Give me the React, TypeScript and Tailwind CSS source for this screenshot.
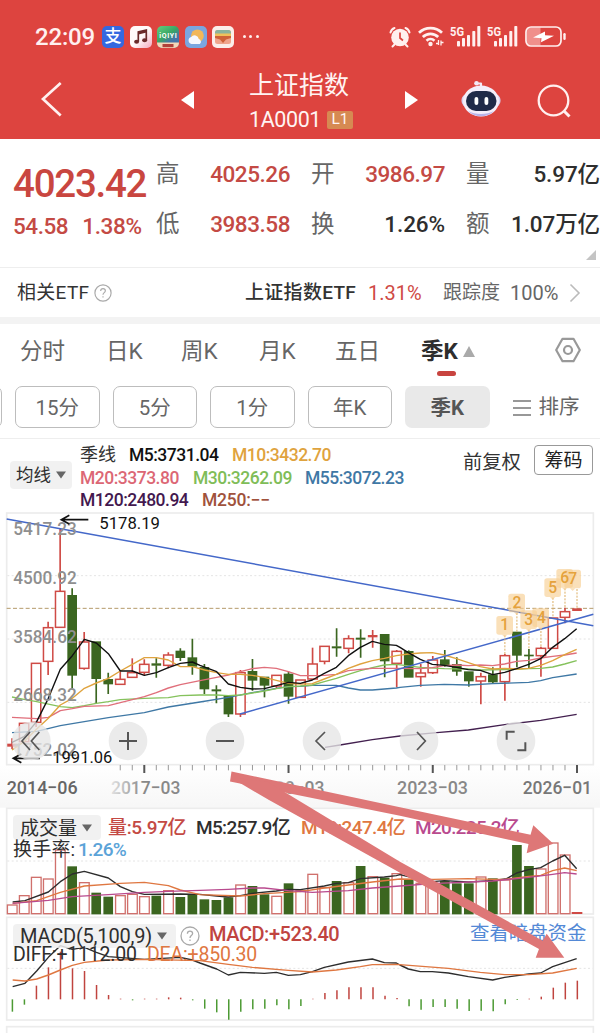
import type { ReactNode } from 'react';
import clsx from 'clsx';

type Dir = 'r' | 'g';
type Candle = [Dir, number, number, number, number]; // dir, bodyTop, bodyBottom, high, low

const STEP = 36.06;
const X0 = 36.2;
const cx = (i: number) => X0 + i * STEP;

const candles: Candle[] = [
  ['r', 717, 724, 700, 732], ['r', 655, 710, 655, 710], ['r', 475, 652, 475, 666], ['r', 368, 469, 350, 510],
  ['r', 259, 367, 72, 367], ['g', 272, 510, 250, 550], ['r', 411, 490, 381, 494], ['g', 411, 520, 411, 596],
  ['g', 524, 536, 503, 567], ['r', 523, 538, 500, 538], ['r', 503, 517, 460, 517], ['r', 478, 502, 463, 511],
  ['g', 476, 481, 460, 518], ['r', 450, 481, 442, 490], ['g', 439, 457, 430, 468], ['g', 459, 483, 401, 509],
  ['g', 488, 551, 477, 567], ['g', 554, 558, 541, 595], ['g', 575, 626, 575, 636], ['r', 503, 627, 495, 636],
  ['g', 500, 525, 462, 557], ['g', 517, 540, 517, 577], ['r', 511, 543, 511, 550], ['g', 508, 573, 500, 596],
  ['r', 525, 577, 525, 577], ['r', 477, 522, 428, 522], ['r', 424, 469, 424, 478], ['g', 425, 429, 370, 455],
  ['r', 401, 430, 391, 445], ['g', 399, 403, 373, 458], ['r', 391, 396, 375, 428], ['g', 389, 467, 387, 517],
  ['r', 439, 475, 435, 547], ['g', 440, 516, 436, 516], ['r', 504, 515, 477, 545], ['r', 465, 503, 453, 507],
  ['g', 465, 478, 435, 485], ['g', 479, 498, 457, 512], ['g', 501, 527, 501, 545], ['r', 515, 528, 503, 598],
  ['g', 510, 530, 487, 537], ['r', 452, 530, 447, 587], ['g', 382, 450, 382, 487], ['g', 450, 453, 432, 492],
  ['r', 430, 452, 425, 515], ['r', 339, 430, 339, 430], ['r', 320, 337, 308, 355], ['r', 311, 317, 311, 317],
];

const volumeTops = [
  315, 287, 232, 237, 150, 199, 248, 278, 290, 287, 283, 290, 287, 272, 291, 283, 298, 300, 292, 255, 258, 283, 289, 250,
  272, 223, 263, 243, 248, 198, 230, 233, 221, 240, 250, 250, 243, 250, 250, 231, 235, 240, 135, 198, 207, 129, 165, 338,
];

const macdEnds = [
  635, 614, 557, 502, 455, 505, 513, 555, 585, 596, 601, 596, 596, 592, 593, 601, 626, 637, 659, 635, 628, 626, 616, 628,
  618, 596, 579, 571, 562, 562, 562, 587, 594, 619, 629, 621, 621, 626, 633, 632, 634, 613, 600, 596, 590, 563, 548, 542,
];

const maLines = [
  { color: '#3f78a5', points: '36,683 110,679 181,662 253,650 325,638 433,623 505,606 600,591 685,577 757,563 829,550 865,545 901,544 937,541 1009,541 1045,549 1081,555 1117,555 1189,549 1200,547 1261,541 1333,538 1405,540 1478,536 1586,532 1622,527 1658,518 1730,507' },
  { color: '#85c25c', points: '36,576 72,583 110,590 181,605 217,608 253,602 289,595 325,590 361,584 433,580 505,578 541,572 600,570 650,570 685,572 721,570 757,564 793,558 829,551 865,545 901,543 937,540 973,530 1009,520 1045,508 1081,497 1117,488 1153,480 1189,478 1261,487 1333,491 1405,492 1441,495 1514,494 1550,493 1586,491 1622,490 1658,486 1694,477 1730,467' },
  { color: '#e06f7b', points: '36,637 110,641 145,637 181,617 217,611 253,604 325,602 361,593 397,584 433,575 469,563 505,549 541,539 600,527 650,517 685,510 721,500 757,491 793,487 829,490 865,500 901,512 937,512 973,511 1009,508 1045,497 1081,493 1117,490 1189,490 1261,491 1297,488 1333,482 1369,480 1405,482 1441,480 1478,482 1514,477 1550,469 1586,466 1622,459 1658,454 1694,450 1730,444' },
  { color: '#dfa33e', points: '36,735 72,710 110,672 145,640 181,600 217,580 253,550 289,534 325,520 361,498 397,478 433,458 469,458 505,465 541,485 577,485 614,495 650,503 685,508 721,508 757,511 793,517 829,526 865,535 901,537 937,536 973,522 1009,508 1045,490 1081,477 1117,467 1153,460 1189,452 1225,447 1261,444 1297,443 1333,450 1369,461 1405,473 1441,485 1478,492 1514,490 1550,492 1586,490 1622,481 1658,467 1694,449 1730,433' },
  { color: '#111111', points: '36,712 72,695 110,650 145,580 181,493 217,452 253,403 289,414 325,446 361,498 397,498 433,511 469,503 505,488 541,475 577,471 600,481 650,500 685,537 721,547 757,552 793,551 829,542 865,532 901,535 937,525 973,505 1009,487 1045,452 1081,427 1117,409 1153,418 1189,421 1200,427 1225,443 1261,463 1297,478 1333,481 1369,487 1405,494 1441,496 1478,509 1514,502 1550,491 1586,478 1622,461 1658,427 1694,401 1730,371' },
  { color: '#43204f', points: '975,727 1020,720 1117,704 1200,693 1310,683 1405,675 1514,659 1622,646 1730,628' },
];

const volLines = [
  { color: '#2d2d2d', points: '38,306 75,302 145,276 181,245 217,222 253,214 325,234 361,260 397,275 433,283 541,282 600,283 650,288 685,291 721,287 757,280 829,273 865,268 901,269 973,258 1009,250 1045,248 1081,236 1153,231 1189,227 1200,224 1261,239 1297,245 1333,242 1405,246 1478,242 1520,236 1550,219 1586,209 1622,203 1658,183 1694,166 1730,206' },
  { color: '#df7741', points: '38,310 110,302 181,277 253,258 361,250 433,247 505,257 541,270 600,284 721,288 793,281 901,275 973,264 1045,255 1117,246 1200,237 1300,238 1405,236 1478,238 1514,238 1586,229 1622,226 1658,212 1694,204 1730,212' },
  { color: '#b94a8e', points: '38,310 145,301 217,290 325,284 433,277 505,274 600,271 685,268 757,264 793,264 865,272 937,277 1045,272 1117,264 1200,258 1297,251 1405,246 1478,243 1586,232 1658,223 1694,218 1730,222' },
];

const macdLines = [
  { color: '#2d2d2d', points: '38,560 75,550 110,513 145,472 181,437 217,448 253,442 289,457 325,470 433,478 541,472 577,480 600,489 650,507 685,525 721,517 793,520 829,517 865,526 901,524 937,515 973,502 1045,486 1117,477 1153,488 1189,489 1200,495 1225,507 1261,515 1297,515 1345,519 1405,530 1478,540 1514,532 1586,522 1622,519 1658,500 1694,488 1730,476' },
  { color: '#df7741', points: '38,540 75,543 110,537 145,525 181,510 217,496 253,487 325,480 433,478 600,482 685,493 757,502 865,511 937,516 1009,510 1081,500 1117,494 1189,493 1345,505 1441,517 1514,524 1586,524 1658,519 1730,505' },
];

const flags = [
  { n: '1', x: 1514, y: 333, to: 450, tx: 1514 },
  { n: '2', x: 1550, y: 266, to: 382, tx: 1551 },
  { n: '3', x: 1586, y: 316, to: 432, tx: 1586 },
  { n: '4', x: 1622, y: 310, to: 425, tx: 1624 },
  { n: '5', x: 1658, y: 220, to: 339, tx: 1658 },
  { n: '6', x: 1694, y: 192, to: 308, tx: 1694 },
  { n: '7', x: 1718, y: 194, to: 311, tx: 1718 },
];

const priceLabels = [
  { v: '5417.23', y: 89 },
  { v: '4500.92', y: 238 },
  { v: '3584.62', y: 413 },
  { v: '2668.32', y: 589 },
  { v: '1752.02', y: 753 },
];

function Lines({ lines }: { lines: { color: string; points: string }[] }) {
  return (
    <>
      {lines.map((l) => (
        <polyline key={l.color} points={l.points} fill="none" stroke={l.color} strokeWidth="4.2" strokeLinejoin="round" />
      ))}
    </>
  );
}

function Help({ className }: { className?: string }) {
  return (
    <svg viewBox="0 0 20 20" className={className} fill="none" stroke="#aaa" strokeWidth="1.3">
      <circle cx="10" cy="10" r="9" />
      <path d="M7.4 7.8c0-3.6 5.2-3.4 5.2-.2 0 2-2.6 2-2.6 4.3M10 13.6v1.5" />
    </svg>
  );
}

function Caret() {
  return (
    <svg viewBox="0 0 10 8" className="h-2 w-2.5 shrink-0">
      <path d="M0 .5h10L5 7.5z" fill="#666" />
    </svg>
  );
}

function Signal() {
  return (
    <svg viewBox="0 0 31 21" className="h-[21px] w-[31px] overflow-visible" fill="#fff0ef">
      <text x="0" y="10" fontSize="12.5" fontWeight="700" textLength="14" lengthAdjust="spacingAndGlyphs">5G</text>
      <rect x="7" y="15" width="3" height="5.5" rx=".8" />
      <rect x="12" y="12" width="3" height="8.5" rx=".8" />
      <rect x="17" y="9" width="3" height="11.5" rx=".8" />
      <rect x="22.3" y="5" width="3" height="15.5" rx=".8" />
      <rect x="27.3" y="0" width="3" height="20.5" rx=".8" />
    </svg>
  );
}

function StatusBar() {
  return (
    <div className="flex h-[50px] items-end pr-[33px] pl-[35px] text-[#fff0ef]">
      <div className="flex h-[27px] w-[67px] items-center text-[24px] font-medium tracking-[-0.2px]">22:09</div>
      <div className="flex h-[27px] items-center gap-[5.5px]">
        <div className="flex size-[22px] items-center justify-center rounded-[5px] bg-[#3468df] text-[17px] leading-none font-medium text-white">支</div>
        <svg viewBox="0 0 22 22" className="size-[22px]">
          <defs>
            <linearGradient id="music" x1="0" y1="0" x2="1" y2="1">
              <stop offset="0.5" stopColor="#fffafa" />
              <stop offset="1" stopColor="#f3a8bd" />
            </linearGradient>
          </defs>
          <rect width="22" height="22" rx="5" fill="url(#music)" />
          <path d="M8.3 15.5V6l8-1.9v9.8" fill="none" stroke="#6b2a2a" strokeWidth="1.7" />
          <path d="M8.3 7.2l8-1.9" stroke="#6b2a2a" strokeWidth="2.5" />
          <ellipse cx="6.6" cy="15.8" rx="2.5" ry="2" fill="#6b2a2a" />
          <ellipse cx="14.6" cy="14.2" rx="2.5" ry="2" fill="#6b2a2a" />
        </svg>
        <svg viewBox="0 0 22 22" className="size-[22px]">
          <defs>
            <linearGradient id="iq" x1="0" y1="0" x2="0.7" y2="1">
              <stop offset="0" stopColor="#62cf7c" />
              <stop offset="0.5" stopColor="#38a565" />
              <stop offset="0.75" stopColor="#4575a8" />
            </linearGradient>
          </defs>
          <rect width="22" height="22" rx="5" fill="url(#iq)" />
          <path d="M0 16.5h22v.5a5 5 0 0 1-5 5H5a5 5 0 0 1-5-5z" fill="#f4d6b8" />
          <path d="M5.5 18h11v3.2h-11z" fill="#b0413a" />
          <text x="2.3" y="12" fontSize="7" fontWeight="700" fill="#fff" textLength="17.5">iQIYI</text>
        </svg>
        <svg viewBox="0 0 22 22" className="size-[22px]">
          <rect width="22" height="22" rx="5" fill="#7ba6df" />
          <circle cx="12.4" cy="9.8" r="6.4" fill="#f2b758" />
          <path d="M6.5 18a3.6 3.6 0 0 1-.3-7 4.3 4.3 0 0 1 7.6 2 2.8 2.8 0 0 1 1 5z" fill="#f6f8fd" />
        </svg>
        <svg viewBox="0 0 22 22" className="size-[22px]">
          <rect width="22" height="22" rx="5" fill="#fbeeea" />
          <rect x="3" y="4" width="16" height="14" rx="2.5" fill="#f0a58c" />
          <path d="M3 8.5V6.3A2.5 2.5 0 0 1 5.5 4h11A2.5 2.5 0 0 1 19 6.5v2z" fill="#8ab39c" />
          <path d="M3 7.5h16V10H3z" fill="#f0c05a" />
          <path d="M3 10h16v2l-5 1.5-3 3.5-3-3.5L3 12z" fill="#cf6238" />
        </svg>
        <div className="ml-[3px] flex gap-[3.5px]">
          <i className="size-[3px] rounded-full bg-[#fff0ef]" />
          <i className="size-[3px] rounded-full bg-[#fff0ef]" />
          <i className="size-[3px] rounded-full bg-[#fff0ef]" />
        </div>
      </div>
      <div className="ml-auto flex h-[27px] items-center">
        <svg viewBox="0 0 22 22" className="mr-[7px] size-[22px]">
          <path d="M5.5 18.5l-2 2M16.5 18.5l2 2M1.500 6.500c.5-2.200 2-3.800 4-4.500M20.500 6.500c-.5-2.200-2-3.800-4-4.500" stroke="#fff0ef" strokeWidth="2" strokeLinecap="round" fill="none" />
          <circle cx="11" cy="11.5" r="8.8" fill="#fff0ef" />
          <path d="M11 6.5V12l3 2.5" fill="none" stroke="#dd443f" strokeWidth="1.7" />
        </svg>
        <svg viewBox="0 0 26 21" className="mr-[6px] h-[21px] w-[26px]" fill="none" stroke="#fff0ef" strokeWidth="2.7">
          <path d="M1 6.800a16.500 16.500 0 0 1 23 0M4.800 11a11 11 0 0 1 15.400 0M8.500 14.700a6 6 0 0 1 8 0" />
          <circle cx="12.5" cy="18" r="2.2" fill="#fff0ef" stroke="none" />
          <path d="M20.5 14v5M23 14.5v5M18 17.5h3M22.500 16.500h3" strokeWidth="1.3" />
        </svg>
        <Signal />
        <div className="w-[6px]" />
        <Signal />
        <svg viewBox="0 0 42 21" className="ml-[7px] h-[21px] w-[42px]">
          <path d="M2 5.500a4 4 0 0 1 4-4h9.500v18H6a4 4 0 0 1-4-4z" fill="#f08f8b" />
          <rect x="1" y="1" width="35" height="19" rx="5" fill="none" stroke="#fff0ef" strokeWidth="1.7" />
          <rect x="38.3" y="7" width="2.4" height="7" rx="1.2" fill="#fff0ef" />
          <path d="M20 5.5L8 11.5l8.500.8-.5 4L29 9.800l-9-.6z" fill="#fff" />
        </svg>
      </div>
    </div>
  );
}

function TitleBar() {
  return (
    <div className="flex h-[89px] items-start pt-[17px]">
      <svg viewBox="0 0 24 36" className="mt-[14px] ml-[40px] h-9 w-6" fill="none" stroke="#fff0ef" strokeWidth="2.7">
        <path d="M20.700 2L3 18l17.700 16.500" />
      </svg>
      <svg viewBox="0 0 14 18" className="mt-[24px] ml-[117px] h-[18px] w-[14px]"><path d="M13 0v18L0 9z" fill="#fff" /></svg>
      <div className="ml-[54px] w-[106px] text-[#fff4f3]">
        <div className="h-[37px] text-[25px] leading-[37px]">上证指数</div>
        <div className="flex h-[32px] items-center gap-[6px] leading-none">
          <span className="text-[21.5px] tracking-[-0.4px]">1A0001</span>
          <span className="flex h-[18px] w-[26px] items-center justify-center rounded-[2px] bg-[#d68a52] text-[15.5px]">L1</span>
        </div>
      </div>
      <svg viewBox="0 0 14 18" className="mt-[24px] ml-[50px] h-[18px] w-[14px]"><path d="M0 0v18l13-9z" fill="#fff" /></svg>
      <svg viewBox="0 0 40 38" className="mt-[13px] ml-[42px] h-[38px] w-[40px]">
        <path d="M20 7V3.500M20 3.500h-4.500" stroke="#f3e9f6" strokeWidth="2.2" strokeLinecap="round" />
        <circle cx="15.5" cy="3.3" r="2.3" fill="#f3e9f6" />
        <rect x=".5" y="14" width="39" height="13" rx="6" fill="#d9d2f2" />
        <ellipse cx="20" cy="21" rx="18" ry="15.5" fill="#f4eefa" />
        <path d="M7 31c7 7 19 7 26 0-7 4-19 4-26 0z" fill="#b9b3ea" />
        <rect x="5" y="11" width="30.5" height="20" rx="10" fill="#202a48" />
        <rect x="13.5" y="17" width="3.8" height="8" rx="1.9" fill="#fff" />
        <rect x="23.5" y="17" width="3.8" height="8" rx="1.9" fill="#fff" />
      </svg>
      <svg viewBox="0 0 36 36" className="mt-[17px] ml-[36px] size-9" fill="none" stroke="#fff0ef" strokeWidth="2.3">
        <circle cx="16.5" cy="16.5" r="14.8" />
        <path d="M27 27l5.500 5.500" strokeWidth="3" />
      </svg>
    </div>
  );
}

function Stat({ label, value, red }: { label: string; value: string; red?: boolean }) {
  return (
    <div className="flex h-[50px] items-center justify-between whitespace-nowrap">
      <span className="text-[23.5px] text-[#666]">{label}</span>
      <span className={clsx('text-[22.5px] font-medium', red ? 'tracking-[-0.45px] text-[#c44a44]' : 'tracking-[-0.1px] text-[#2e2e2e]')}>{value}</span>
    </div>
  );
}

function Quote() {
  return (
    <div className="relative flex h-[129px] border-b border-[#eeeeee] pt-[11px]">
      <div className="w-[156px] pl-[13px] text-[#c94640]">
        <div className="mt-[10px] h-[48px] text-[38.5px] leading-[48px] font-medium tracking-[-1.25px]">4023.42</div>
        <div className="flex h-[38px] items-center gap-[14px] text-[22.5px] font-medium text-[#c44a44]">
          <span className="tracking-[-0.45px]">54.58</span>
          <span className="tracking-[-0.3px]">1.38%</span>
        </div>
      </div>
      <div className="grid h-[100px] grid-cols-[134px_134px_134px] gap-x-[21px]">
        <Stat label="高" value="4025.26" red />
        <Stat label="开" value="3986.97" red />
        <Stat label="量" value="5.97亿" />
        <Stat label="低" value="3983.58" red />
        <Stat label="换" value="1.26%" />
        <Stat label="额" value="1.07万亿" />
      </div>
      <svg viewBox="0 0 10 10" className="absolute right-[4px] bottom-[7px] size-[10px]"><path d="M10 0v10H0z" fill="#c4c4c4" /></svg>
    </div>
  );
}

function EtfRow() {
  return (
    <div className="flex h-[49px] items-center pt-[1px] pl-[17px] text-[19px] whitespace-nowrap text-[#333]">
      <span className="w-[77px] tracking-[0.3px]">相关ETF</span>
      <Help className="size-[18px]" />
      <span className="ml-[133px] w-[123px] font-medium tracking-[0.3px]">上证指数ETF</span>
      <span className="w-[75px] text-[20px] text-[#cf4a45]">1.31%</span>
      <span className="w-[67px] text-[#666]">跟踪度</span>
      <span className="w-[59px] text-[20px] text-[#666]">100%</span>
      <svg viewBox="0 0 12 20" className="h-5 w-3" fill="none" stroke="#bbb" strokeWidth="1.6"><path d="M1.500 1.500L10 10l-8.500 8.500" /></svg>
    </div>
  );
}

function Tabs() {
  return (
    <div className="grid h-[62px] grid-cols-[86px_75px_78px_76px_86px_134px_1fr] pt-[9px] pl-[20px] text-[22.5px] leading-[36px] text-[#666]">
      <span>分时</span>
      <span>日K</span>
      <span>周K</span>
      <span>月K</span>
      <span>五日</span>
      <div>
        <div className="flex items-center gap-[5px] font-bold text-[#2e2e2e]">
          季K
          <svg viewBox="0 0 12 11" className="h-[11px] w-[12px]"><path d="M6 0l6 11H0z" fill="#aaa" /></svg>
        </div>
        <div className="mt-[2px] ml-[16px] h-[5px] w-[19px] rounded-full bg-[#c8443f]" />
      </div>
      <svg viewBox="0 0 26 26" className="mt-[4px] size-[26px]" fill="none" stroke="#999" strokeWidth="2.2">
        <path d="M7.500 1.800h11L24.800 13l-6.300 11.200h-11L1.200 13z" strokeLinejoin="round" />
        <circle cx="13" cy="13" r="4" />
      </svg>
    </div>
  );
}

function Chips() {
  return (
    <div className="flex h-[53px] items-start gap-[13px] overflow-hidden border-b border-[#eeeeee] text-[20.5px] text-[#666]">
      <div className="-ml-[82.5px] h-[42px] w-[84.5px] shrink-0 rounded-[7px] border border-[#bdbdbd]" />
      {['15分', '5分', '1分', '年K'].map((t) => (
        <div key={t} className="flex h-[42px] w-[84.5px] shrink-0 items-center justify-center rounded-[7px] border border-[#bdbdbd] pt-[2px]">{t}</div>
      ))}
      <div className="flex h-[42px] w-[84.5px] shrink-0 items-center justify-center rounded-[7px] bg-[#e9e9e9] pt-[2px] font-bold text-[#555]">季K</div>
      <div className="ml-[10px] flex h-[42px] items-center gap-[8px] pt-[1px]">
        <svg viewBox="0 0 18 16" className="h-4 w-[18px]" stroke="#777" strokeWidth="1.5"><path d="M0 1h18M0 8h18M0 15h18" /></svg>
        排序
      </div>
    </div>
  );
}

function Drop({ children, className }: { children: ReactNode; className?: string }) {
  return <div className={clsx('flex shrink-0 items-center rounded-[4px] bg-[#efefef]/85 text-[#2e2e2e]', className)}>{children}<Caret /></div>;
}

function MaLegend() {
  return (
    <div className="flex h-[66px] text-[17.5px] font-medium whitespace-nowrap">
      <Drop className="mt-[22px] ml-[10px] h-[28px] w-[62px] gap-[5px] pl-[6px] font-normal">均线</Drop>
      <div className="ml-[8px] w-[383px] pt-[5px] leading-[22.7px] tracking-[-0.5px]">
        <div className="flex">
          <span className="w-[49px] text-[18px] font-normal tracking-normal text-[#333]">季线</span>
          <span className="w-[103px] text-[#111]">M5:3731.04</span>
          <span className="text-[#dfa33e]">M10:3432.70</span>
        </div>
        <div className="flex">
          <span className="w-[113px] text-[#dc6775]">M20:3373.80</span>
          <span className="w-[112px] text-[#7fbd58]">M30:3262.09</span>
          <span className="text-[#3f78a5]">M55:3072.23</span>
        </div>
        <div className="flex">
          <span className="w-[122px] text-[#43184f]">M120:2480.94</span>
          <span className="tracking-[-0.2px] text-[#a0523c]">M250:−−</span>
        </div>
      </div>
      <span className="mt-[10px] w-[71px] text-[19.3px] leading-[28px] font-normal text-[#333]">前复权</span>
      <div className="mt-[6px] flex h-[30px] w-[59px] items-center justify-center rounded-[4px] border border-[#999] pt-[2px] text-[19px] font-normal text-[#222]">筹码</div>
    </div>
  );
}

function RoundButton({ x, d, w = 5 }: { x: number; d: string; w?: number }) {
  return (
    <g transform={`translate(${x} 708)`}>
      <circle r="58" fill="#e6e6e6" fillOpacity="0.78" />
      <path d={d} fill="none" stroke="#555" strokeWidth={w} />
    </g>
  );
}

function KChart() {
  return (
    <svg viewBox="0 0 1800 900" className="block h-[300px] w-[600px]">
      <defs>
        <linearGradient id="axis" x1="0" y1="0" x2="0" y2="1">
          <stop offset="0" stopColor="#fff" />
          <stop offset="1" stopColor="#f7f7f7" />
        </linearGradient>
        <linearGradient id="fadeA" gradientUnits="userSpaceOnUse" x1="320" y1="0" x2="430" y2="0">
          <stop offset="0" stopColor="#888" stopOpacity="0.1" />
          <stop offset="1" stopColor="#888" />
        </linearGradient>
        <linearGradient id="fadeB" gradientUnits="userSpaceOnUse" x1="810" y1="0" x2="880" y2="0">
          <stop offset="0" stopColor="#888" stopOpacity="0" />
          <stop offset="1" stopColor="#888" />
        </linearGradient>
      </defs>
      <rect x="0" y="780" width="1800" height="120" fill="url(#axis)" />
      <rect x="20" y="24" width="1760" height="755" fill="#fff" stroke="#ececec" strokeWidth="5" />
      {[212, 402, 592].map((y) => (
        <path key={y} d={`M22 ${y}H1778`} stroke="#e4e4e4" strokeWidth="3" strokeDasharray="6 7" />
      ))}
      <path d="M20 310H1780" stroke="#b59a6a" strokeWidth="3" strokeDasharray="12 7" />

      {candles.map(([dir, top, bottom, high, low], i) => {
        const x = cx(i);
        const thin = bottom - top < 8;
        const color = dir === 'r' ? '#cf4a45' : '#3b6620';
        return (
          <g key={i}>
            <path d={`M${x} ${high}V${top}M${x} ${bottom}V${low}`} stroke={color} strokeWidth="5" />
            {dir === 'r' && !thin ? (
              <rect x={x - 14} y={top} width="28" height={bottom - top} fill="#fff" stroke={color} strokeWidth="4.5" />
            ) : (
              <rect x={x - 14.5} y={top - (thin ? 1 : 2)} width="29" height={bottom - top + (thin ? 2 : 4)} fill={color} />
            )}
          </g>
        );
      })}
      <Lines lines={maLines} />
      <path d="M20 42L1780 362M720 627L1780 328" stroke="#4468c9" strokeWidth="4.5" />

      {priceLabels.map((p) => (
        <text key={p.v} x="40" y={p.y} fontSize="56" fontWeight="500" fill="#8f8f8f" textLength="190" lengthAdjust="spacingAndGlyphs">{p.v}</text>
      ))}

      {flags.map((f) => (
        <g key={f.n}>
          <path d={`M${cx(40 + Number(f.n))} ${f.y + 58}V${f.to}`} stroke="#dcae63" strokeWidth="3" strokeDasharray="6 4" />
          <rect x={f.x - 25} y={f.y} width="50" height="56" rx="8" fill="#f7cf94" fillOpacity="0.65" />
          <path d={`M${f.x - 8} ${f.y + 56}h16l-8 8z`} fill="#f7cf94" fillOpacity="0.65" />
        </g>
      ))}
      {flags.map((f) => (
        <text key={f.n} x={f.tx} y={f.y + 43} fontSize="47" fontWeight="500" fill="#e5a23c" textAnchor="middle">{f.n}</text>
      ))}

      <g fill="none" stroke="#111" strokeWidth="5">
        <path d="M265 44H186M208 31L184 44l24 13" />
        <path d="M120 760H42M64 747L40 760l24 13" />
      </g>
      <text x="298" y="73" fontSize="52" fill="#111" textLength="182" lengthAdjust="spacingAndGlyphs">5178.19</text>
      <text x="157" y="773" fontSize="52" fill="#111" textLength="180" lengthAdjust="spacingAndGlyphs">1991.06</text>

      <RoundButton x={94} d="M-4 -27L-28 0L-4 27M24 -27L0 0L24 27" />
      <RoundButton x={384} d="M-27 0H27M0 -27V27" w={6} />
      <RoundButton x={675} d="M-27 0H27" w={6} />
      <RoundButton x={966} d="M9 -27L-18 0L9 27" />
      <RoundButton x={1257} d="M-6 -27L19 0L-6 27" />
      <RoundButton x={1548} d="M-28 -4V-28H-4M28 4V28H4" w={6} />

      {Array.from({ length: 39 }, (_, k) => k + 9).map((i) => {
        const major = [11, 23, 35, 47].includes(i);
        return <path key={i} d={`M${cx(i)} 780V${major ? 804 : 796}`} stroke={major ? '#555' : '#999'} strokeWidth={major ? 6 : 3} />;
      })}
      <g fontSize="56" fontWeight="500" fill="#888">
        <text x="20" y="866" fill="#666" textLength="213" lengthAdjust="spacingAndGlyphs">2014−06</text>
        <text x="333" y="866" fill="url(#fadeA)" textLength="208" lengthAdjust="spacingAndGlyphs">2017−03</text>
        <text x="765" y="866" fill="url(#fadeB)" textLength="208" lengthAdjust="spacingAndGlyphs">2020−03</text>
        <text x="1191" y="866" textLength="213" lengthAdjust="spacingAndGlyphs">2023−03</text>
        <text x="1568" y="866" fill="#777" textLength="208" lengthAdjust="spacingAndGlyphs">2026−01</text>
      </g>
    </svg>
  );
}

function VolumePanel() {
  return (
    <div className="relative h-[111px] whitespace-nowrap">
      <svg viewBox="0 15 1800 333" className="absolute inset-0 h-[111px] w-[600px]">
        <rect x="0" y="15" width="1800" height="8" fill="#f7f7f7" />
        <rect x="20" y="25" width="1760" height="317" fill="none" stroke="#ececec" strokeWidth="5" />
        <path d="M22 183H1778" stroke="#e4e4e4" strokeWidth="3" strokeDasharray="6 7" />
        {volumeTops.map((top, i) => {
          if (i === 47) return <rect key={i} x={cx(i) - 16} y="336" width="32" height="6" fill="#cf4a45" />;
          return candles[i][0] === 'r' ? (
            <rect key={i} x={cx(i) - 14} y={top} width="29" height={341 - top} fill="#fff" stroke="#d0706c" strokeWidth="4" />
          ) : (
            <rect key={i} x={cx(i) - 14.5} y={top} width="29" height={343 - top} fill="#3b6620" />
          );
        })}
        <Lines lines={volLines} />
      </svg>
      <div className="relative flex items-center pt-[10px] pl-[13px] text-[19px] leading-[25px] font-medium tracking-[-0.65px]">
        <Drop className="h-[25px] w-[88px] gap-[5px] pt-px pl-[7px] font-normal tracking-normal">成交量</Drop>
        <span className="ml-[7px] w-[88px] tracking-[-0.35px] text-[#c44a44]">量:5.97亿</span>
        <span className="w-[105px] text-[#2e2e2e]">M5:257.9亿</span>
        <span className="w-[114px] text-[#df7741]">M10:247.4亿</span>
        <span className="text-[#b94a8e]">M20:225.2亿</span>
      </div>
      <div className="relative -mt-px flex pl-[13px] text-[19px] leading-[22px] text-[#2e2e2e]">
        <span className="w-[65px] tracking-[0.2px]">换手率:</span>
        <span className="font-medium tracking-[-0.75px] text-[#5ba3d8]">1.26%</span>
      </div>
    </div>
  );
}

function MacdPanel() {
  return (
    <div className="relative h-[117px] whitespace-nowrap">
      <svg viewBox="0 348 1800 351" className="absolute inset-0 h-[117px] w-[600px]">
        <rect x="20" y="352" width="1760" height="308" fill="none" stroke="#ececec" strokeWidth="5" />
        <rect x="20" y="680" width="1760" height="60" fill="none" stroke="#ececec" strokeWidth="5" />
        <path d="M22 505H1778" stroke="#e4e4e4" strokeWidth="3" strokeDasharray="6 7" />
        {macdEnds.map((y, i) => (
          <path key={i} d={`M${cx(i) + 1} 598V${y}`} stroke={y < 598 ? '#c0443f' : '#4c9a33'} strokeWidth="4.5" />
        ))}
        <Lines lines={macdLines} />
      </svg>
      <div className="relative flex items-start pt-[8px] pl-[13px] text-[20px] leading-[20px]">
        <Drop className="h-[24px] w-[163px] gap-[5px] pl-[7px] tracking-[-0.2px]"><span className="w-[132px]">MACD(5,100,9)</span></Drop>
        <Help className="mt-[2px] ml-[4px] size-[20px]" />
        <span className="ml-[9px] w-[261px] font-medium tracking-[-0.45px] text-[#c0443f]">MACD:+523.40</span>
        <span className="text-[19.4px] text-[#5389d6]">查看暗盘资金</span>
      </div>
      <div className="relative -mt-[4px] flex pl-[13px] text-[19.5px] leading-[22px] tracking-[-0.2px]">
        <span className="w-[134px] text-[#2e2e2e]">DIFF:+1112.00</span>
        <span className="text-[#df7741]">DEA:+850.30</span>
      </div>
    </div>
  );
}

export default function App() {
  return (
    <div className="relative h-[1033px] w-[600px] overflow-hidden bg-white font-['Roboto','Noto_Sans_CJK_SC',sans-serif]">
      <header className="bg-[#dd443f]">
        <StatusBar />
        <TitleBar />
      </header>
      <Quote />
      <EtfRow />
      <div className="h-[7px] bg-[#f3f3f3]" />
      <Tabs />
      <Chips />
      <MaLegend />
      <KChart />
      <VolumePanel />
      <MacdPanel />
      {/* hand-drawn arrows pointing at the latest volume and MACD */}
      <svg viewBox="0 760 600 210" className="pointer-events-none absolute top-[760px] left-0 h-[210px] w-[600px]" fill="#de7777">
        <path d="M231.500 771.500L400 807.300l130.500 27.500 2.800-9.500 20 18.500-26.600 9.500 1.800-9.300L400 815.700 230 781.500z" />
        <path d="M240 778.500L268 782l132 79.700 142.700 79 4-7 17.600 24h-28.600l3.300-8.700L400 872.700 269 800 240 783z" />
      </svg>
    </div>
  );
}
